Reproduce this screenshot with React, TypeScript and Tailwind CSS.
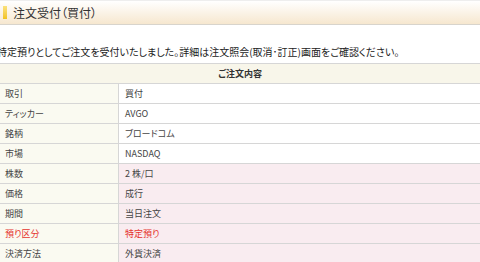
import React from "react";

const rows: { label: string; value: string; pink?: boolean; red?: boolean }[] = [
  { label: "取引", value: "買付" },
  { label: "ティッカー", value: "AVGO" },
  { label: "銘柄", value: "ブロードコム" },
  { label: "市場", value: "NASDAQ" },
  { label: "株数", value: "2 株/口", pink: true },
  { label: "価格", value: "成行", pink: true },
  { label: "期間", value: "当日注文", pink: true },
  { label: "預り区分", value: "特定預り", pink: true, red: true },
  { label: "決済方法", value: "外貨決済", pink: true },
];

export default function App() {
  return (
    <div
      className="w-[480px] h-[262px] overflow-hidden bg-white text-[#333] [font-feature-settings:'palt']"
      style={{ fontFamily: '"Noto Sans CJK JP", "Noto Sans", sans-serif' }}
    >
      <div className="h-[25px] border-t border-t-[#eeeeee] border-b border-b-[#d8d4cc] bg-gradient-to-b from-[#ffffff] to-[#f6e7cf] flex items-center">
        <div className="ml-[3px] w-[4px] h-[13px] bg-gradient-to-b from-[#fbe27a] to-[#f2c21a]" />
        <div className="ml-[6px] text-[12px] leading-none text-[#333]">注文受付（買付）</div>
      </div>
      <div className="h-[38px] flex items-end pb-[6px]">
        <div className="ml-[-3px] whitespace-nowrap text-[10px] leading-none text-[#222]">
          特定預りとしてご注文を受付いたしました。詳細は注文照会(取消･訂正)画面をご確認ください。
        </div>
      </div>
      <div className="border-t border-[#d6d6d6]">
        <div className="h-[20px] bg-[#f8f6ea] border-b border-[#d6d6d6] flex items-center justify-center text-[9px] font-bold text-[#333]">
          ご注文内容
        </div>
        {rows.map((r) => (
          <div key={r.label} className="h-[20px] flex border-b border-[#d6d6d6] text-[9px]">
            <div
              className={`w-[119px] border-r border-[#d6d6d6] bg-[#fafaf1] flex items-center pl-[5px] ${
                r.red ? "text-[#e5342e]" : "text-[#444]"
              }`}
            >
              {r.label}
            </div>
            <div
              className={`flex-1 flex items-center pl-[6px] ${r.pink ? "bg-[#f9ecf0]" : "bg-white"} ${
                r.red ? "text-[#e5342e]" : "text-[#444]"
              }`}
            >
              {r.value}
            </div>
          </div>
        ))}
      </div>
    </div>
  );
}
